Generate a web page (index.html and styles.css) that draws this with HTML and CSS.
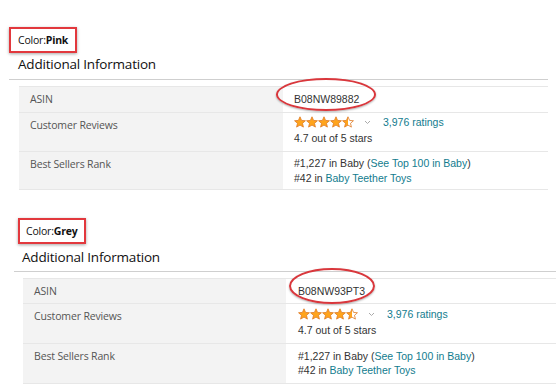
FILE: index.html
```html
<!DOCTYPE html>
<html>
<head>
<meta charset="utf-8">
<link rel="stylesheet" href="styles.css">
</head>
<body>
<section class="block block-pink">
  <div class="color-tag"><span class="color-label">Color:</span><b>Pink</b></div>
  <h2 class="heading">Additional Information</h2>
  <div class="rule"></div>
  <div class="table">
    <div class="row row-asin">
      <div class="label">ASIN</div>
      <div class="value"><span class="asin">B08NW89882<span class="ellipse"></span></span></div>
    </div>
    <div class="row row-reviews">
      <div class="label">Customer Reviews</div>
      <div class="value">
        <div class="stars-line">
          <svg class="stars" width="60" height="13" viewBox="0 0 60 13">
            <defs>
              <linearGradient id="half1"><stop offset="50%" stop-color="#ffa41c"/><stop offset="50%" stop-color="#fff"/></linearGradient>
            </defs>
            <g stroke="#de7921" stroke-width="0.8" stroke-linejoin="round">
              <path fill="#ffa41c" d="M6 0.8l1.55 3.6 3.9.35-2.95 2.55.9 3.8L6 9.1l-3.4 2 .9-3.8L.55 4.75l3.9-.35z"/>
              <path fill="#ffa41c" transform="translate(12 0)" d="M6 0.8l1.55 3.6 3.9.35-2.95 2.55.9 3.8L6 9.1l-3.4 2 .9-3.8L.55 4.75l3.9-.35z"/>
              <path fill="#ffa41c" transform="translate(24 0)" d="M6 0.8l1.55 3.6 3.9.35-2.95 2.55.9 3.8L6 9.1l-3.4 2 .9-3.8L.55 4.75l3.9-.35z"/>
              <path fill="#ffa41c" transform="translate(36 0)" d="M6 0.8l1.55 3.6 3.9.35-2.95 2.55.9 3.8L6 9.1l-3.4 2 .9-3.8L.55 4.75l3.9-.35z"/>
              <path fill="url(#half1)" transform="translate(48 0)" d="M6 0.8l1.55 3.6 3.9.35-2.95 2.55.9 3.8L6 9.1l-3.4 2 .9-3.8L.55 4.75l3.9-.35z"/>
            </g>
          </svg>
          <svg class="chev" width="7" height="5" viewBox="0 0 7 5"><path d="M1 1l2.5 2.5L6 1" fill="none" stroke="#aaa" stroke-width="1"/></svg>
          <a class="link ratings">3,976 ratings</a>
        </div>
        <div>4.7 out of 5 stars</div>
      </div>
    </div>
    <div class="row row-rank">
      <div class="label">Best Sellers Rank</div>
      <div class="value">
        <div>#1,227 in Baby (<a class="link">See Top 100 in Baby</a>)</div>
        <div>#42 in <a class="link">Baby Teether Toys</a></div>
      </div>
    </div>
  </div>
</section>

<section class="block block-grey">
  <div class="color-tag"><span class="color-label">Color:</span><b>Grey</b></div>
  <h2 class="heading">Additional Information</h2>
  <div class="rule"></div>
  <div class="table">
    <div class="row row-asin">
      <div class="label">ASIN</div>
      <div class="value"><span class="asin">B08NW93PT3<span class="ellipse"></span></span></div>
    </div>
    <div class="row row-reviews">
      <div class="label">Customer Reviews</div>
      <div class="value">
        <div class="stars-line">
          <svg class="stars" width="60" height="13" viewBox="0 0 60 13">
            <defs>
              <linearGradient id="half2"><stop offset="50%" stop-color="#ffa41c"/><stop offset="50%" stop-color="#fff"/></linearGradient>
            </defs>
            <g stroke="#de7921" stroke-width="0.8" stroke-linejoin="round">
              <path fill="#ffa41c" d="M6 0.8l1.55 3.6 3.9.35-2.95 2.55.9 3.8L6 9.1l-3.4 2 .9-3.8L.55 4.75l3.9-.35z"/>
              <path fill="#ffa41c" transform="translate(12 0)" d="M6 0.8l1.55 3.6 3.9.35-2.95 2.55.9 3.8L6 9.1l-3.4 2 .9-3.8L.55 4.75l3.9-.35z"/>
              <path fill="#ffa41c" transform="translate(24 0)" d="M6 0.8l1.55 3.6 3.9.35-2.95 2.55.9 3.8L6 9.1l-3.4 2 .9-3.8L.55 4.75l3.9-.35z"/>
              <path fill="#ffa41c" transform="translate(36 0)" d="M6 0.8l1.55 3.6 3.9.35-2.95 2.55.9 3.8L6 9.1l-3.4 2 .9-3.8L.55 4.75l3.9-.35z"/>
              <path fill="url(#half2)" transform="translate(48 0)" d="M6 0.8l1.55 3.6 3.9.35-2.95 2.55.9 3.8L6 9.1l-3.4 2 .9-3.8L.55 4.75l3.9-.35z"/>
            </g>
          </svg>
          <svg class="chev" width="7" height="5" viewBox="0 0 7 5"><path d="M1 1l2.5 2.5L6 1" fill="none" stroke="#aaa" stroke-width="1"/></svg>
          <a class="link ratings">3,976 ratings</a>
        </div>
        <div>4.7 out of 5 stars</div>
      </div>
    </div>
    <div class="row row-rank">
      <div class="label">Best Sellers Rank</div>
      <div class="value">
        <div>#1,227 in Baby (<a class="link">See Top 100 in Baby</a>)</div>
        <div>#42 in <a class="link">Baby Teether Toys</a></div>
      </div>
    </div>
  </div>
</section>
</body>
</html>
```

FILE: styles.css
```css
* { box-sizing: border-box; }
html, body { margin: 0; padding: 0; background: #fff; }
body { width: 556px; height: 388px; overflow: hidden; font-family: "Liberation Sans", Arial, sans-serif; }

.block { display: flex; flex-direction: column; align-items: flex-start; }
.block-pink { padding: 27px 8px 0 9px; }
.block-grey { padding: 28px 0 0 18px; }

.color-tag {
  height: 26px;
  border: 2px solid #e2383d;
  box-shadow: 0 1px 3px rgba(0,0,0,0.35);
  padding: 0 7px 0 7px;
  display: flex;
  align-items: center;
  font-family: "Open Sans", sans-serif;
  font-size: 10.5px;
  color: #111;
  background: #fff;
  letter-spacing: -0.2px;
}
.color-tag b { font-weight: 700; }
.block-grey .color-tag { padding: 0 6px 0 6px; }

.heading {
  margin: 1px 0 0 9px;
  font-family: "Open Sans", sans-serif;
  font-weight: 400;
  font-size: 13.5px;
  line-height: 20px;
  color: #111;
  letter-spacing: -0.2px;
}
.block-grey .heading { margin: 3px 0 0 4px; }

.rule { align-self: stretch; height: 1px; background: #cfcfcf; margin-top: 5px; }
.block-grey .rule { margin: 4px 0 0 -4px; }

.table {
  align-self: stretch;
  margin: 6px 0 0 10px;
  border-top: 1px solid #e7e7e7;
  font-size: 10.5px;
  color: #333;
}
.block-grey .table { margin: 6px 0 0 5px; }

.row { display: grid; grid-template-columns: 264px 1fr; border-bottom: 1px solid #e7e7e7; }
.block-grey .row { grid-template-columns: 263px 1fr; }

.label {
  background: #f3f3f3;
  font-family: "Open Sans", sans-serif;
  font-size: 10.5px;
  letter-spacing: -0.15px;
  color: #555;
  padding: 5px 11px 0 11px;
  line-height: 15px;
}
.value { padding: 5px 11px 4px 11px; line-height: 15px; }
.block-grey .value { padding-left: 12px; }

.row-asin .label, .row-asin .value { height: 25px; }
.row-reviews .value { height: 38px; padding-top: 1px; }
.row-rank .value { height: 37px; padding-top: 4px; }
.block-grey .row-asin .value, .block-grey .row-asin .label { height: 24px; }
.block-grey .row-reviews .value { height: 39px; padding-top: 2px; }
.block-grey .row-rank .value { height: 39px; padding-top: 5px; line-height: 14px; }

.asin { position: relative; display: inline-block; }
.ellipse {
  position: absolute;
  left: -18px; top: -14px;
  width: 100px; height: 33px;
  border: 2.5px solid #d9373c;
  border-radius: 50%;
  box-shadow: 0 1px 2px rgba(0,0,0,0.3);
}
.block-grey .ellipse { left: -9px; top: -16px; width: 86px; height: 36px; }

.stars-line { display: flex; align-items: center; height: 17px; }
.stars { display: block; }
.chev { margin-left: 10px; display: block; }
.ratings { margin-left: 12px; }
.link { color: #127c8e; text-decoration: none; }
```
